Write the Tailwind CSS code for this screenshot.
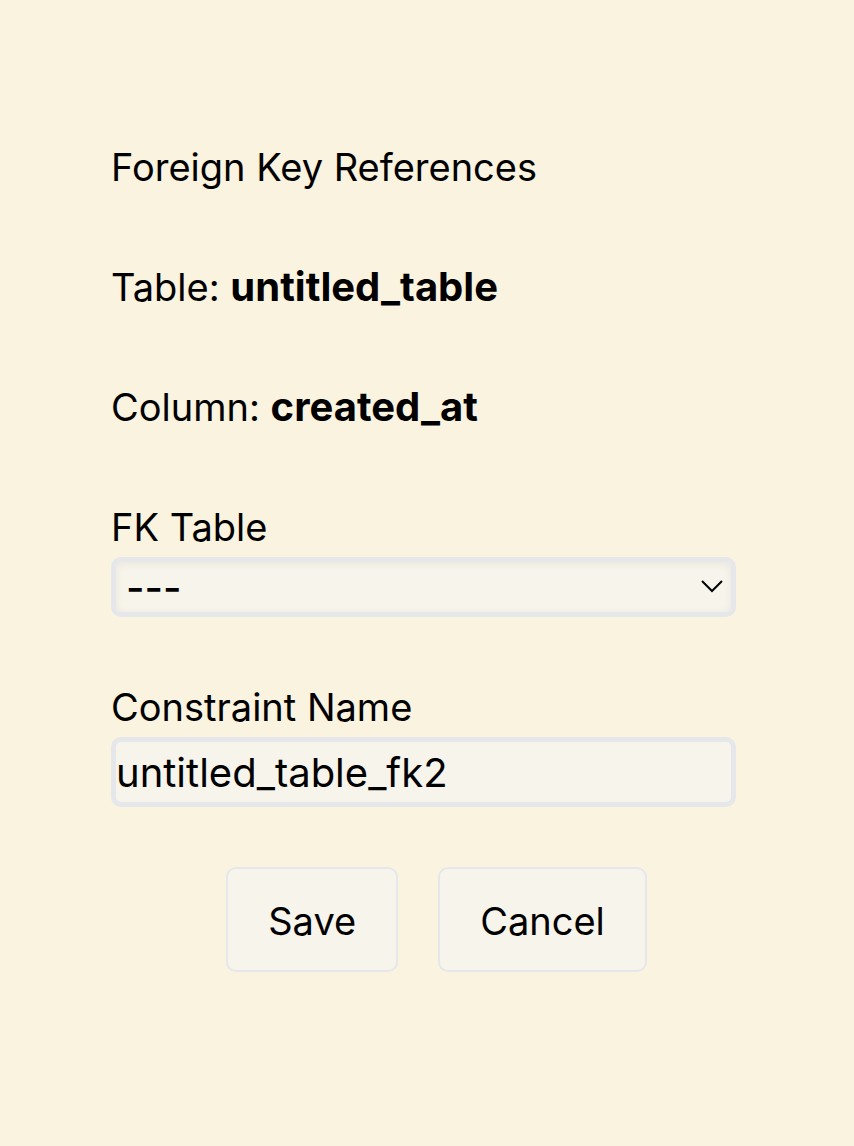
<!DOCTYPE html>
<html lang="en">
<head>
<meta charset="utf-8">
<title>Foreign Key References</title>
<script src="https://cdn.jsdelivr.net/npm/@tailwindcss/browser@4"></script>
</head>
<body class="min-h-screen bg-[#faf3df] font-['Inter',sans-serif] text-[38px] leading-[60px] text-black">
<form class="flex flex-col gap-[60px] pt-[137px] pr-[118px] pl-[111px]">
  <h1>Foreign Key References</h1>
  <p>Table: <strong class="text-[40px] leading-[60px] font-bold">untitled_table</strong></p>
  <p>Column: <strong class="text-[40px] leading-[60px] font-bold">created_at</strong></p>
  <div class="flex flex-col">
    <label for="fk">FK Table</label>
    <div class="relative flex">
      <select id="fk" class="h-[60px] w-full appearance-none rounded-[10px] border-[5px] border-[#e5e7eb] bg-[#f7f4eb] px-[10px] pt-[2px] text-[40px] leading-[48px] font-medium shadow-[inset_0_2px_10px_rgba(0,0,0,0.06)]"><option>---</option></select>
      <svg class="pointer-events-none absolute top-[22px] right-[12px] h-[14px] w-[24px]" viewBox="0 0 24 14" fill="none" stroke="black" stroke-width="2"><path d="M2 2l10 10L22 2"/></svg>
    </div>
  </div>
  <div class="flex flex-col">
    <label for="name">Constraint Name</label>
    <input id="name" type="text" value="untitled_table_fk2" class="h-[70px] w-full rounded-[10px] border-[5px] border-[#e5e7eb] bg-[#f7f4eb] text-[40px]">
  </div>
  <div class="flex justify-center gap-[40px] pl-[26px]">
    <button type="button" class="rounded-[10px] border-2 border-[#e5e7eb] bg-[#f7f4eb] px-[40px] pt-[22px] pb-[19px]">Save</button>
    <button type="button" class="rounded-[10px] border-2 border-[#e5e7eb] bg-[#f7f4eb] px-[40px] pt-[22px] pb-[19px]">Cancel</button>
  </div>
</form>
</body>
</html>
